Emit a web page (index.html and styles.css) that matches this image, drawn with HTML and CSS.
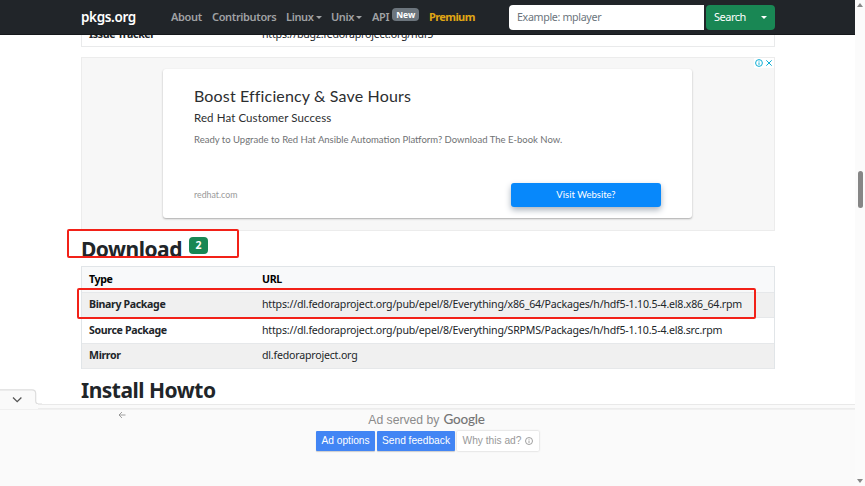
FILE: index.html
```html
<!DOCTYPE html>
<html lang="en">
<head>
<meta charset="utf-8">
<title>pkgs.org</title>
<link rel="stylesheet" href="styles.css">
</head>
<body>
<div class="page">
  <header class="navbar">
    <a class="brand">pkgs.org</a>
    <nav class="nav">
      <a class="about">About</a>
      <a class="contrib">Contributors</a>
      <a class="linux">Linux<i class="caret"></i></a>
      <a class="unix">Unix<i class="caret"></i></a>
      <a class="api">API<span class="new">New</span></a>
      <a class="premium">Premium</a>
    </nav>
    <div class="search">
      <div class="input">Example: mplayer</div>
      <div class="search-btn"><span>Search</span><i class="caret"></i></div>
    </div>
  </header>
  <main class="content">
    <div class="row issue"><b>Issue Tracker</b><span>https://bugz.fedoraproject.org/hdf5</span></div>
    <section class="ad">
      <div class="ad-marks">
        <svg width="8" height="8" viewBox="0 0 8 8"><circle cx="4" cy="4" r="3.4"/><path d="M4 3.4v2.5M4 1.8v.8"/></svg>
        <svg width="8" height="8" viewBox="0 0 8 8"><path d="M1.3 1.3l5.4 5.4M6.7 1.3L1.3 6.7"/></svg>
      </div>
      <div class="card">
        <div class="ad-title"><span>Boost Efficiency &amp; Save Hours</span></div>
        <div class="ad-sub"><span>Red Hat Customer Success</span></div>
        <div class="ad-text"><span>Ready to Upgrade to Red Hat Ansible Automation Platform? Download The E-book Now.</span></div>
        <div class="ad-foot"><span class="domain">redhat.com</span><span class="visit">Visit Website?</span></div>
      </div>
    </section>
    <h2 class="download"><span>Download</span><span class="count">2</span></h2>
    <div class="table">
      <div class="row head"><b>Type</b><b>URL</b></div>
      <div class="row odd"><b>Binary Package</b><span>https://dl.fedoraproject.org/pub/epel/8/Everything/x86_64/Packages/h/hdf5-1.10.5-4.el8.x86_64.rpm</span></div>
      <div class="row"><b>Source Package</b><span>https://dl.fedoraproject.org/pub/epel/8/Everything/SRPMS/Packages/h/hdf5-1.10.5-4.el8.src.rpm</span></div>
      <div class="row odd"><b>Mirror</b><span>dl.fedoraproject.org</span></div>
    </div>
    <h2 class="install"><span>Install Howto</span></h2>
  </main>
  <div class="mark mark-heading"></div>
  <div class="mark mark-row"></div>
  <div class="anchor">
    <svg class="tab" width="42" height="17" viewBox="0 0 42 17"><path class="tab-bg" d="M0 .8H32Q35.7.8 35.7 4.500V12Q35.700 15 39 15H42V17H0Z"/><path class="tab-line" d="M0 .8H32Q35.700.8 35.700 4.500V12Q35.700 15 39 15H42"/><path class="chev" d="M13 8.500l4.200 4.200L21.400 8.500"/></svg>
    <div class="anchor-edge"></div>
    <div class="anchor-body">
      <svg class="back" width="8" height="8" viewBox="0 0 8 8"><path d="M7.500 4H1M4 1L1 4l3 3"/></svg>
      <div class="served"><span>Ad served by</span><span class="google">Google</span></div>
      <div class="buttons">
        <span class="btn opt">Ad options</span><span class="btn send">Send feedback</span><span class="btn why">Why this ad?<svg width="8" height="8" viewBox="0 0 8 8"><circle cx="4" cy="4" r="3.500"/><path d="M4 3.500v2.500M4 1.900v.8"/></svg></span>
      </div>
    </div>
  </div>
</div>
<aside class="scrollbar"><i class="up"></i><i class="thumb"></i><i class="down"></i></aside>
</body>
</html>
```
FILE: styles.css
```css
* { box-sizing: border-box; }
body { margin: 0; width: 865px; height: 486px; overflow: hidden; display: flex; background: #fff; color: #212529; font: 11px/1.5 "Noto Sans", sans-serif; }
.page { position: relative; width: 855px; height: 486px; overflow: hidden; display: flex; flex-direction: column; }
.page span, .page b, .page a { white-space: nowrap; }
.navbar { height: 35px; flex: none; background: #212529; border-bottom: 1px solid #15181b; display: flex; align-items: center; padding-left: 81px; z-index: 1; }
.brand { width: 90px; color: #fff; font-size: 13.5px; font-weight: 600; letter-spacing: -.35px; }
.nav { display: flex; width: 338px; color: #a0a2a4; font-weight: 600; font-size: 11px; letter-spacing: -.35px; }
.nav a { display: flex; align-items: center; }
.about { width: 41px; }
.contrib { width: 74px; }
.linux { width: 45px; }
.unix { width: 41px; }
.api { width: 57px; }
.premium { color: #e0a714; font-weight: 700; letter-spacing: -.6px; }
.caret { border: 3px solid transparent; border-top-color: currentColor; border-bottom: 0; margin-left: 2px; }
.new { background: #6c757d; color: #fff; font-size: 8.500px; font-weight: 700; line-height: 13px; width: 27px; text-align: center; letter-spacing: -.1px; border-radius: 4px; margin: -5px 0 0 3px; }
.search { display: flex; gap: 2px; height: 25px; }
.input { width: 195px; background: #fff; border-radius: 4px 0 0 4px; color: #6c757d; padding-left: 8px; line-height: 25px; font-size: 10.700px; letter-spacing: -.35px; }
.search-btn { width: 69px; background: #198754; border-radius: 4px; color: #fff; display: flex; align-items: center; justify-content: space-between; padding: 0 8px; font-size: 11px; letter-spacing: -.5px; }
.content { width: 694px; margin-left: 81px; flex: 1; min-height: 0; display: flex; flex-direction: column; }
.row { height: 25.500px; flex: none; display: flex; align-items: center; padding: 1px 0 0 7px; border-bottom: 1px solid #e6e8ea; font-size: 10.600px; letter-spacing: -.2px; }
.row b { width: 173px; font-weight: 700; letter-spacing: -.35px; }
.issue { margin-top: -13.500px; border: 1px solid #e9eaeb; }
.ad { margin-top: 10px; height: 174px; flex: none; position: relative; background: #f7f7f7; border: 1px solid #ececec; padding: 11px 0 0 81px; }
.ad-marks { position: absolute; top: 0; right: 0; display: flex; gap: 2px; padding: 1px 1px; background: #fff; }
.ad-marks svg { fill: none; stroke: #10aed5; }
.card { width: 529px; height: 149px; background: #fff; border-radius: 3px; box-shadow: 0 1px 2px #aaa; padding: 15px 31px 0; color: #2c2e30; font-family: Lato, sans-serif; }
.ad-title { height: 23px; line-height: 24px; font-size: 16px; letter-spacing: .15px; }
.ad-sub { height: 22px; line-height: 21px; font-size: 11.500px; letter-spacing: .1px; }
.ad-text { height: 22px; line-height: 22px; font-size: 9.500px; color: #707274; }
.ad-foot { display: flex; justify-content: space-between; align-items: center; margin-top: 32px; }
.domain { color: #999; font-size: 8.800px; }
.visit { width: 150px; height: 24px; background: #0788fb; color: #fff; border-radius: 3px; text-align: center; line-height: 24px; font-size: 9.500px; box-shadow: 0 3px 6px #a9b2bc; }
h2 { margin: 0; font-size: 21px; font-weight: 700; line-height: 26px; letter-spacing: -.5px; }
.download { height: 35px; flex: none; display: flex; padding-top: 5px; }
.count { width: 19px; height: 17px; margin: 1px 0 0 7px; background: #198754; color: #fff; border-radius: 4px; font-size: 10.500px; line-height: 17px; text-align: center; letter-spacing: 0; }
.table { border: 1px solid #e1e5e8; border-bottom: 0; }
.head { background: #f8f9fa; color: #000; }
.odd { background: #f0f0f0; }
.install { padding-top: 8px; }
.mark { position: absolute; border: 2px solid #f22118; border-radius: 2px; }
.mark-heading { left: 67px; top: 229px; width: 172px; height: 29px; }
.mark-row { left: 77px; top: 288px; width: 679px; height: 31px; }
.anchor { position: absolute; left: 0; right: 0; top: 389px; height: 97px; display: flex; flex-direction: column; }
.tab { display: block; flex: none; }
.tab-bg { fill: #fafafa; }
.tab-line { fill: none; stroke: #ddd; stroke-width: 1.200; }
.chev { fill: none; stroke: #555; stroke-width: 1.300; }
.anchor-edge { height: 5px; flex: none; margin-top: -2px; background: #fafafa; border-top: 1px solid #e9e9e9; border-bottom: 1px solid #ececec; margin-left: 38px; box-shadow: -38px 0 0 #fafafa; }
.anchor-body { position: relative; flex: 1; background: #fafafa; display: flex; flex-direction: column; align-items: center; font-family: "Liberation Sans", sans-serif; border-top: 1px solid #f0f0f0; }
.back { position: absolute; left: 118px; top: 1px; fill: none; stroke: #888; stroke-width: .8; }
.served { display: flex; align-items: baseline; gap: 4px; height: 20px; line-height: 20px; color: #8b8b8b; font-size: 12.200px; padding-right: 2px; }
.google { font: 500 13.500px/18px Lato, sans-serif; letter-spacing: -.2px; color: #757575; }
.buttons { display: flex; gap: 2px; padding-top: 1px; }
.btn { height: 20px; line-height: 20px; font-size: 10.200px; text-align: center; background: #4285f4; color: #fff; border-radius: 1px; box-shadow: 0 1px 1px #ccc; }
.opt { width: 59px; }
.send { width: 78px; }
.btn.why { width: 82px; background: #fff; color: #999; display: flex; align-items: center; justify-content: center; gap: 4px; box-shadow: 0 0 2px #bbb; }
.why svg { fill: none; stroke: #888; stroke-width: .8; }
.scrollbar { width: 10px; height: 486px; background: #fbfbfb; display: flex; flex-direction: column; align-items: center; padding: 3px 0; }
.up { border: 3px solid transparent; border-top: 0; border-bottom: 4px solid #888; }
.thumb { width: 5px; height: 37px; margin-top: 164px; background: #868686; border-radius: 3px; }
.down { border: 3px solid transparent; border-bottom: 0; border-top: 4px solid #888; margin-top: auto; }
```
